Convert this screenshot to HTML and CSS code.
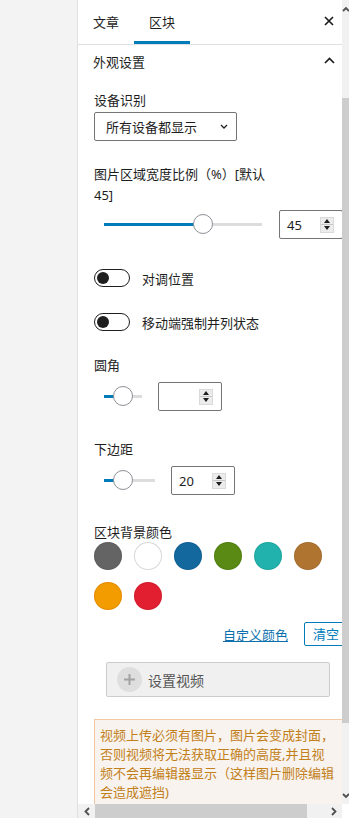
FILE: index.html
```html
<!DOCTYPE html>
<html lang="zh">
<head>
<meta charset="utf-8">
<link rel="stylesheet" href="styles.css">
</head>
<body>
<div class="app">
  <div class="left"></div>
  <div class="panel">
    <div class="viewport">
      <div class="header">
        <div class="tab">文章</div>
        <div class="tab active">区块</div>
        <div class="close">
          <svg width="10" height="10" viewBox="0 0 10 10"><path d="M1 1L9 9M9 1L1 9" stroke="#1e1e1e" stroke-width="1.7" fill="none"/></svg>
        </div>
      </div>
      <div class="section-head">
        <span>外观设置</span>
        <svg width="11" height="7" viewBox="0 0 11 7"><path d="M1 6L5.5 1.5L10 6" stroke="#1e1e1e" stroke-width="1.7" fill="none"/></svg>
      </div>
      <div class="body">
        <div class="lbl l-device">设备识别</div>
        <div class="select">
          <span>所有设备都显示</span>
          <svg width="8" height="5" viewBox="0 0 8 5"><path d="M1 1L4 4L7 1" stroke="#1e1e1e" stroke-width="1.3" fill="none"/></svg>
        </div>
        <div class="lbl l-ratio">图片区域宽度比例（%）[默认 45]</div>
        <div class="range-row r-ratio">
          <div class="range" style="width:158px"><div class="fill" style="width:99px"></div><div class="thumb" style="left:89px"></div></div>
          <div class="num"><span>45</span><div class="spin"><div class="up"></div><div class="dn"></div></div></div>
        </div>
        <div class="toggle-row t1">
          <div class="toggle"><div class="knob"></div></div>
          <span>对调位置</span>
        </div>
        <div class="toggle-row t2">
          <div class="toggle"><div class="knob"></div></div>
          <span>移动端强制并列状态</span>
        </div>
        <div class="lbl l-radius">圆角</div>
        <div class="range-row r-small">
          <div class="range" style="width:38px"><div class="fill" style="width:19px"></div><div class="thumb" style="left:9px"></div></div>
          <div class="num"><span></span><div class="spin"><div class="up"></div><div class="dn"></div></div></div>
        </div>
        <div class="lbl l-margin">下边距</div>
        <div class="range-row r-small">
          <div class="range" style="width:51px"><div class="fill" style="width:19px"></div><div class="thumb" style="left:9px"></div></div>
          <div class="num"><span>20</span><div class="spin"><div class="up"></div><div class="dn"></div></div></div>
        </div>
        <div class="lbl l-color">区块背景颜色</div>
        <div class="swatches">
          <div class="sw c1"></div>
          <div class="sw c2"></div>
          <div class="sw c3"></div>
          <div class="sw c4"></div>
          <div class="sw c5"></div>
          <div class="sw c6"></div>
          <div class="sw c7"></div>
          <div class="sw c8"></div>
        </div>
        <div class="color-actions">
          <a class="link">自定义颜色</a>
          <div class="clear">清空</div>
        </div>
        <div class="video-btn">
          <div class="plus">
            <svg width="25" height="25" viewBox="0 0 25 25"><path d="M12.5 7V18M7 12.5H18" stroke="#a2a2a2" stroke-width="2" fill="none"/></svg>
          </div>
          <span>设置视频</span>
        </div>
        <div class="note">视频上传必须有图片，图片会变成封面，否则视频将无法获取正确的高度,并且视频不会再编辑器显示（这样图片删除编辑会造成遮挡)</div>
      </div>
    </div>
    <div class="vscroll">
      <div class="varrow top"><svg width="7" height="6" viewBox="0 0 7 6"><path d="M1 5L4 2L7 5" stroke="#505050" stroke-width="1.8" fill="none"/></svg></div>
      <div class="vspace"></div>
      <div class="vthumb"></div>
      <div class="vrest"></div>
      <div class="varrow bottom"><svg width="7" height="6" viewBox="0 0 7 6"><path d="M1 1L4 4L7 1" stroke="#505050" stroke-width="1.8" fill="none"/></svg></div>
    </div>
    <div class="hscroll">
      <div class="harrow"><svg width="6" height="9" viewBox="0 0 6 9"><path d="M5 1L1.5 4.5L5 8" stroke="#505050" stroke-width="1.8" fill="none"/></svg></div>
      <div class="hthumb"></div>
      <div class="hrest"></div>
      <div class="harrow"><svg width="6" height="9" viewBox="0 0 6 9"><path d="M1 1L4.5 4.5L1 8" stroke="#505050" stroke-width="1.8" fill="none"/></svg></div>
    </div>
    <div class="corner"></div>
  </div>
</div>
</body>
</html>
```
FILE: styles.css
```css
* { box-sizing: border-box; }
body {
  margin: 0;
  background: #f3f3f3;
  font-family: "Noto Sans", "Noto Sans CJK SC", sans-serif;
  font-size: 13px;
  color: #1e1e1e;
}
.app { display: flex; height: 818px; overflow: hidden; }
.left { width: 77px; flex: none; }
.panel {
  width: 272px;
  flex: none;
  border-left: 1px solid #e0e0e0;
  background: #fff;
  display: grid;
  grid-template-columns: 264px 7px;
  grid-template-rows: 804px 14px;
}
.viewport { overflow: hidden; }
.header {
  display: flex;
  width: 264px;
  height: 45px;
  border-bottom: 1px solid #e0e0e0;
}
.tab { padding: 0 15px; line-height: 44px; height: 44px; }
.tab.active { box-shadow: inset 0 -3px 0 #007cba; }
.close { margin-left: auto; display: flex; align-items: center; padding-right: 8px; padding-bottom: 2px; }
.section-head {
  width: 264px;
  height: 33px;
  display: flex;
  align-items: center;
  justify-content: space-between;
  padding: 0 7px 0 15px;
}
.section-head svg { margin-bottom: 3px; }
.body { padding-left: 16px; }
.lbl { line-height: 20px; white-space: nowrap; }
.l-device { margin-top: 12px; }
.select {
  margin-top: 2px;
  width: 143px;
  height: 29px;
  border: 1px solid #757575;
  border-radius: 2px;
  display: flex;
  align-items: center;
  justify-content: space-between;
  padding: 0 8px 0 11px;
}
.l-ratio { margin-top: 23px; line-height: 21px; width: 180px; white-space: normal; }
.range-row {
  display: flex;
  align-items: center;
  gap: 17px;
  padding-left: 10px;
  height: 29px;
}
.r-ratio { margin-top: 4px; }
.r-small { margin-top: 7px; gap: 16px; }
.range { position: relative; height: 3px; background: #dcdcde; flex: none; }
.fill { height: 3px; background: #007cba; }
.thumb {
  position: absolute;
  top: -9px;
  width: 20px;
  height: 20px;
  border-radius: 50%;
  background: #fff;
  border: 1px solid #8c8f94;
}
.num {
  width: 64px;
  height: 29px;
  flex: none;
  border: 1px solid #757575;
  border-radius: 2px;
  display: flex;
  align-items: center;
  justify-content: space-between;
  padding: 0 8px 0 7px;
}
.spin {
  width: 14px;
  height: 16px;
  background: #ececec;
  display: flex;
  flex-direction: column;
  border: 1px solid #dadada;
}
.spin .up, .spin .dn { flex: 1; display: flex; align-items: center; justify-content: center; }
.spin .up { border-bottom: 1px solid #c8c8c8; }
.spin .up::before {
  content: "";
  border-left: 3.5px solid transparent;
  border-right: 3.5px solid transparent;
  border-bottom: 4px solid #1e1e1e;
}
.spin .dn::before {
  content: "";
  border-left: 3.5px solid transparent;
  border-right: 3.5px solid transparent;
  border-top: 4px solid #1e1e1e;
}
.toggle-row { display: flex; align-items: center; gap: 12px; height: 18px; }
.t1 { margin-top: 30px; }
.t2 { margin-top: 26px; }
.toggle {
  width: 36px;
  height: 18px;
  border: 1.5px solid #1e1e1e;
  border-radius: 9px;
  display: flex;
  align-items: center;
  padding-left: 1.5px;
}
.knob { width: 12.5px; height: 12.5px; border-radius: 50%; background: #1e1e1e; }
.l-radius { margin-top: 24px; }
.l-margin { margin-top: 28px; }
.l-color { margin-top: 27px; }
.swatches {
  display: flex;
  flex-wrap: wrap;
  gap: 12px;
  width: 228px;
}
.sw { width: 28px; height: 28px; border-radius: 50%; box-shadow: inset 0 0 0 1px rgba(0,0,0,0.08); }
.c1 { background: #646464; }
.c2 { background: #fff; box-shadow: inset 0 0 0 1px #d8d8d8; }
.c3 { background: #13689d; }
.c4 { background: #5a8914; }
.c5 { background: #21b2ad; }
.c6 { background: #b07431; }
.c7 { background: #f39c00; box-shadow: inset 0 0 0 1px rgba(180,100,0,0.25); }
.c8 { background: #e21f31; }
.color-actions {
  margin-top: 12px;
  width: 254px;
  height: 24px;
  display: flex;
  justify-content: flex-end;
  align-items: center;
  gap: 16px;
}
.link { color: #0a6faa; text-decoration: underline; }
.clear {
  height: 24px;
  padding: 0 8px;
  border: 1px solid #007cba;
  border-radius: 2px;
  color: #007cba;
  line-height: 22px;
}
.video-btn {
  margin-top: 16px;
  margin-left: 12px;
  width: 224px;
  height: 35px;
  background: #f0f0f0;
  border: 1px solid #cccccc;
  border-radius: 2px;
  display: flex;
  align-items: center;
  gap: 6px;
  padding-left: 10px;
  color: #555;
  font-size: 14px;
}
.plus { width: 25px; height: 25px; border-radius: 50%; background: #dedede; display: flex; }
.note {
  margin-top: 22px;
  width: 255px;
  background: #f8f3ee;
  border: 1px solid #f1c8a2;
  padding: 6px 12px 6px 5px;
  line-height: 19px;
  color: #c2801a;
  height: 120px;
}
.vscroll { background: #f1f1f1; display: flex; flex-direction: column; }
.varrow { height: 17px; display: flex; align-items: center; padding-left: 0; }
.vspace { height: 81px; }
.vthumb { height: 625px; background: #cdcdcd; }
.vrest { flex: 1; }
.hscroll { grid-column: 1; background: #f1f1f1; display: flex; align-items: stretch; }
.harrow { width: 17px; display: flex; align-items: center; justify-content: center; }
.hthumb { width: 212px; background: #cdcdcd; }
.hrest { flex: 1; }
.corner { background: #fff; }
```
